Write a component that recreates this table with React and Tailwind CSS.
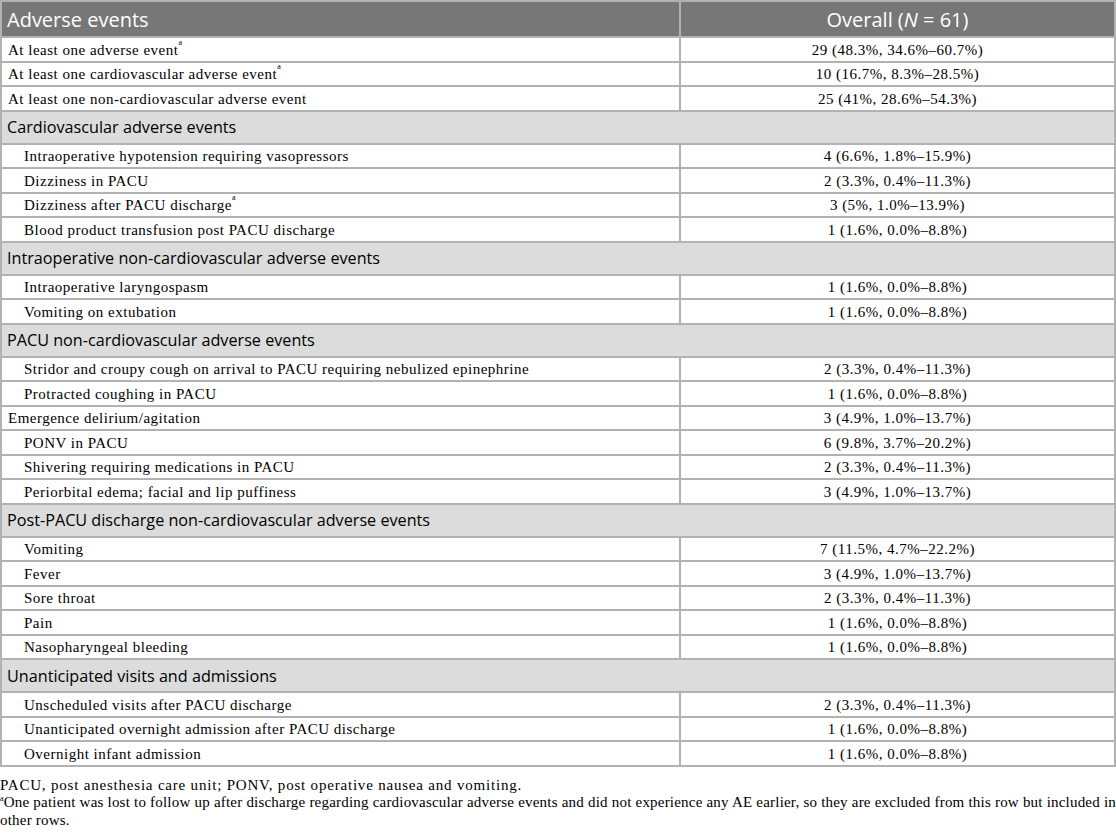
import React from 'react';

const sections = [
  {
    title: null,
    rows: [
      { label: 'At least one adverse event', sup: true, value: '29 (48.3%, 34.6%–60.7%)' },
      { label: 'At least one cardiovascular adverse event', sup: true, value: '10 (16.7%, 8.3%–28.5%)' },
      { label: 'At least one non-cardiovascular adverse event', value: '25 (41%, 28.6%–54.3%)' },
    ],
  },
  {
    title: 'Cardiovascular adverse events',
    rows: [
      { label: 'Intraoperative hypotension requiring vasopressors', indent: true, value: '4 (6.6%, 1.8%–15.9%)' },
      { label: 'Dizziness in PACU', indent: true, value: '2 (3.3%, 0.4%–11.3%)' },
      { label: 'Dizziness after PACU discharge', sup: true, indent: true, value: '3 (5%, 1.0%–13.9%)' },
      { label: 'Blood product transfusion post PACU discharge', indent: true, value: '1 (1.6%, 0.0%–8.8%)' },
    ],
  },
  {
    title: 'Intraoperative non-cardiovascular adverse events',
    rows: [
      { label: 'Intraoperative laryngospasm', indent: true, value: '1 (1.6%, 0.0%–8.8%)' },
      { label: 'Vomiting on extubation', indent: true, value: '1 (1.6%, 0.0%–8.8%)' },
    ],
  },
  {
    title: 'PACU non-cardiovascular adverse events',
    rows: [
      { label: 'Stridor and croupy cough on arrival to PACU requiring nebulized epinephrine', indent: true, value: '2 (3.3%, 0.4%–11.3%)' },
      { label: 'Protracted coughing in PACU', indent: true, value: '1 (1.6%, 0.0%–8.8%)' },
      { label: 'Emergence delirium/agitation', value: '3 (4.9%, 1.0%–13.7%)' },
      { label: 'PONV in PACU', indent: true, value: '6 (9.8%, 3.7%–20.2%)' },
      { label: 'Shivering requiring medications in PACU', indent: true, value: '2 (3.3%, 0.4%–11.3%)' },
      { label: 'Periorbital edema; facial and lip puffiness', indent: true, value: '3 (4.9%, 1.0%–13.7%)' },
    ],
  },
  {
    title: 'Post-PACU discharge non-cardiovascular adverse events',
    rows: [
      { label: 'Vomiting', indent: true, value: '7 (11.5%, 4.7%–22.2%)' },
      { label: 'Fever', indent: true, value: '3 (4.9%, 1.0%–13.7%)' },
      { label: 'Sore throat', indent: true, value: '2 (3.3%, 0.4%–11.3%)' },
      { label: 'Pain', indent: true, value: '1 (1.6%, 0.0%–8.8%)' },
      { label: 'Nasopharyngeal bleeding', indent: true, value: '1 (1.6%, 0.0%–8.8%)' },
    ],
  },
  {
    title: 'Unanticipated visits and admissions',
    rows: [
      { label: 'Unscheduled visits after PACU discharge', indent: true, value: '2 (3.3%, 0.4%–11.3%)' },
      { label: 'Unanticipated overnight admission after PACU discharge', indent: true, value: '1 (1.6%, 0.0%–8.8%)' },
      { label: 'Overnight infant admission', indent: true, value: '1 (1.6%, 0.0%–8.8%)' },
    ],
  },
];

const serif = "font-['Liberation_Serif',_'DejaVu_Serif',_serif]";
const sans = "font-['Open_Sans',_'Noto_Sans',_sans-serif]";

export default function App() {
  return (
    <div className="w-[1116px] bg-white text-black">
      <table className="w-full border-collapse border-2 border-[#b2b2b2]">
        <colgroup>
          <col className="w-[679px]" />
          <col />
        </colgroup>
        <thead>
          <tr className="h-[36px] bg-[#777777] text-white">
            <th className={`${sans} border-2 border-[#b2b2b2] pl-[5px] pt-[2px] text-left text-[20px] font-normal leading-none`}>
              Adverse events
            </th>
            <th className={`${sans} border-2 border-[#b2b2b2] pt-[2px] text-center text-[20px] font-normal leading-none`}>
              Overall (<i>N</i> = 61)
            </th>
          </tr>
        </thead>
        <tbody className={`${serif} text-[15px]`}>
          {sections.map((s, i) => (
            <React.Fragment key={i}>
              {s.title && (
                <tr className="h-[33px] bg-[#dcdcdc]">
                  <td colSpan={2} className={`${sans} border-2 border-[#b2b2b2] pl-[5px] pt-[1px] text-[16.2px] leading-none`}>
                    {s.title}
                  </td>
                </tr>
              )}
              {s.rows.map((r, j) => (
                <tr key={j} className="h-[24.5px]">
                  <td className={`border-2 border-[#b2b2b2] pt-[2px] leading-none tracking-[0.5px] ${r.indent ? 'pl-[22px]' : 'pl-[6px]'}`}>
                    {r.label}
                    {r.sup && <sup className="text-[8px] align-super">a</sup>}
                  </td>
                  <td className="border-2 border-[#b2b2b2] pt-[2px] text-center leading-none tracking-[0.5px]">
                    {r.value}
                  </td>
                </tr>
              ))}
            </React.Fragment>
          ))}
        </tbody>
      </table>
      <div className={`${serif} mt-[10px] text-[15px] leading-[17.5px] text-justify`}>
        <p className="tracking-[0.8px]">PACU, post anesthesia care unit; PONV, post operative nausea and vomiting.</p>
        <p className="tracking-[0.2px]">
          <span className="inline-block align-top text-[8px] leading-[10px]">a</span>One patient was lost to follow up after discharge regarding cardiovascular adverse events and did not experience any AE earlier, so they are excluded from this row but included in other rows.
        </p>
      </div>
    </div>
  );
}
